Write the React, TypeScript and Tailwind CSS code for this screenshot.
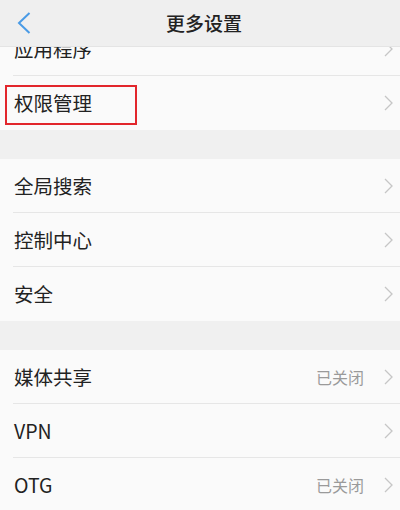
type Row = { label: string; value?: string; boxed?: boolean };

const groups: Row[][] = [
  [{ label: '应用程序' }, { label: '权限管理', boxed: true }],
  [{ label: '全局搜索' }, { label: '控制中心' }, { label: '安全' }],
  [{ label: '媒体共享', value: '已关闭' }, { label: 'VPN' }, { label: 'OTG', value: '已关闭' }],
];

const font = { fontFamily: '"Noto Sans CJK SC", "Liberation Sans", sans-serif' };

const Chevron = () => (
  <svg width="9" height="16" viewBox="0 0 9 16" className="text-[#c6c6c6]">
    <path d="M1 1l7 7-7 7" fill="none" stroke="currentColor" strokeWidth="1.3" />
  </svg>
);

const SettingRow = ({ row, last }: { row: Row; last: boolean }) => (
  <div className="relative h-[54px] flex items-center pl-[14px] pr-[7px]">
    <span className="flex-1 text-[19.5px] text-[#222]">{row.label}</span>
    {row.value && <span className="text-[16px] text-[#9a9a9a] mr-[20px]">{row.value}</span>}
    <Chevron />
    {!last && <div className="absolute left-[13px] right-0 bottom-0 h-px bg-[#e6e6e6]" />}
    {row.boxed && (
      <div className="absolute left-[5px] top-[9px] w-[132px] h-[40px] border-2 border-[#e2262c]" />
    )}
  </div>
);

export default function App() {
  return (
    <div className="w-[400px] h-[510px] overflow-hidden bg-[#f0f0f0]" style={font}>
      {/* Header */}
      <div className="relative h-[47px] bg-[#efefef] border-b border-[#e4e4e4] flex items-center justify-center z-10">
        <svg width="14" height="22" viewBox="0 0 14 22" className="absolute left-[17px] top-[12px] text-[#4a9be6]">
          <path d="M12.5 1L2 11l10.5 10" fill="none" stroke="currentColor" strokeWidth="2" />
        </svg>
        <h1 className="text-[19px] font-medium text-[#222] ml-[8px]">更多设置</h1>
      </div>

      <div className="overflow-hidden">
        {groups.map((group, gi) => (
          <div key={gi} className={gi === 0 ? '-mt-[25px] bg-[#fafafa]' : 'mt-[29px] bg-[#fafafa]'}>
            {group.map((row, i) => (
              <SettingRow key={row.label} row={row} last={i === group.length - 1} />
            ))}
          </div>
        ))}
      </div>
    </div>
  );
}
